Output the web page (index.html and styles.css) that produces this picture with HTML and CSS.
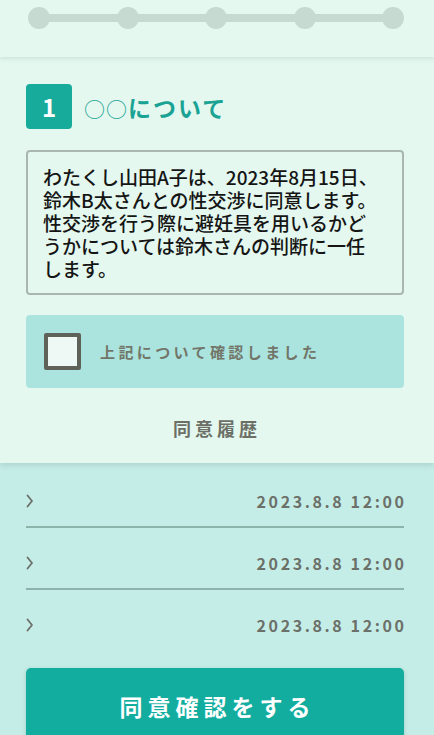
FILE: index.html
```html
<!DOCTYPE html>
<html lang="ja">
<head>
<meta charset="utf-8">
<title>同意確認</title>
<link rel="stylesheet" href="styles.css">
</head>
<body>
<header class="header">
  <div class="progress">
    <span class="dot"></span><span class="bar"></span>
    <span class="dot"></span><span class="bar"></span>
    <span class="dot"></span><span class="bar"></span>
    <span class="dot"></span><span class="bar"></span>
    <span class="dot"></span>
  </div>
</header>
<section class="card">
  <div class="title-row">
    <span class="badge">1</span>
    <h1 class="title"><span class="marks">○○</span>について</h1>
  </div>
  <div class="terms">
    <p class="line">わたくし山田A子は、2023年8月15日、</p>
    <p class="line">鈴木B太さんとの性交渉に同意します。</p>
    <p class="line">性交渉を行う際に避妊具を用いるかど</p>
    <p class="line">うかについては鈴木さんの判断に一任</p>
    <p class="line">します。</p>
  </div>
  <label class="confirm">
    <span class="checkbox"></span>
    <span class="confirm-text">上記について確認しました</span>
  </label>
  <h2 class="history-title">同意履歴</h2>
</section>
<ul class="history">
  <li class="row"><svg class="chev" width="8" height="14" viewBox="0 0 8 14"><polyline points="1.5,1.5 6,7 1.5,12.5" fill="none" stroke="#6b7069" stroke-width="1.8" stroke-linecap="round" stroke-linejoin="round"/></svg><span class="date">2023.8.8 12:00</span></li>
  <li class="row"><svg class="chev" width="8" height="14" viewBox="0 0 8 14"><polyline points="1.5,1.5 6,7 1.5,12.5" fill="none" stroke="#6b7069" stroke-width="1.8" stroke-linecap="round" stroke-linejoin="round"/></svg><span class="date">2023.8.8 12:00</span></li>
  <li class="row"><svg class="chev" width="8" height="14" viewBox="0 0 8 14"><polyline points="1.5,1.5 6,7 1.5,12.5" fill="none" stroke="#6b7069" stroke-width="1.8" stroke-linecap="round" stroke-linejoin="round"/></svg><span class="date">2023.8.8 12:00</span></li>
</ul>
<button class="submit">同意確認をする</button>
</body>
</html>
```
FILE: styles.css
```css
* { box-sizing: border-box; }
html, body { margin: 0; padding: 0; }
body {
  background: #c5ede7;
  font-family: "Noto Sans CJK JP", "Noto Sans", sans-serif;
  width: 434px;
  overflow: hidden;
}
.header {
  position: relative;
  z-index: 2;
  height: 57px;
  background: #e4f8ef;
  box-shadow: 0 2px 4px rgba(60, 90, 80, 0.12);
  padding: 7px 30px 0 28px;
}
.progress {
  display: flex;
  align-items: center;
  height: 22px;
}
.dot {
  width: 22px;
  height: 22px;
  border-radius: 50%;
  background: #c6dad1;
  flex: none;
}
.bar {
  flex: 1;
  height: 8px;
  margin: 0 -2px;
  background: #c6dad1;
}
.card {
  position: relative;
  z-index: 1;
  background: #e4f8ef;
  padding: 27px 30px 23px 26px;
  box-shadow: 0 3px 5px rgba(60, 90, 80, 0.14);
}
.title-row {
  display: flex;
  align-items: center;
  gap: 12px;
}
.badge {
  width: 46px;
  height: 45px;
  border-radius: 4px;
  background: #17ab9b;
  color: #fff;
  font-size: 24px;
  font-weight: 700;
  display: flex;
  align-items: center;
  justify-content: center;
}
.title {
  margin: 0;
  font-size: 23px;
  font-weight: 700;
  letter-spacing: 2px;
  color: #1aa394;
}
.marks {
  font-weight: 400;
  font-size: 21px;
  letter-spacing: 1px;
}
.terms {
  margin-top: 21px;
  height: 145px;
  border: 2px solid #a9b7b0;
  border-radius: 4px;
  padding: 13px 8px 12px 15px;
  color: #151515;
}
.line {
  margin: 0;
  height: 23px;
  font-size: 19px;
  line-height: 23px;
  font-weight: 500;
  white-space: nowrap;
  overflow: visible;
}
.confirm {
  margin-top: 20px;
  height: 73px;
  background: #abe4df;
  border-radius: 4px;
  display: flex;
  align-items: center;
  padding-left: 18px;
  gap: 19px;
}
.checkbox {
  width: 37px;
  height: 37px;
  border: 4px solid #5f6258;
  border-radius: 2px;
  background: #eef8f4;
  flex: none;
}
.confirm-text {
  font-size: 15px;
  font-weight: 700;
  letter-spacing: 3.4px;
  color: #727669;
}
.history-title {
  margin: 28px 0 0;
  text-align: center;
  font-size: 18px;
  line-height: 24px;
  font-weight: 700;
  letter-spacing: 4px;
  color: #6b6f66;
  padding-left: 4px;
}
.history {
  list-style: none;
  margin: 3px 30px 0 26px;
  padding: 0;
}
.row {
  height: 62px;
  display: flex;
  align-items: flex-start;
  justify-content: space-between;
  padding-top: 25px;
  border-bottom: 2px solid #8db4aa;
}
.row:last-child { border-bottom: none; height: 60px; }
.chev { margin-top: 3px; }
.date {
  font-size: 16px;
  line-height: 20px;
  font-weight: 700;
  letter-spacing: 2.6px;
  margin-right: -2.6px;
  color: #6b7069;
}
.submit {
  display: flex;
  align-items: center;
  justify-content: center;
  margin: 18px 30px 0 26px;
  width: 378px;
  height: 76px;
  border: none;
  border-radius: 5px;
  background: #12ad9f;
  box-shadow: 0 1px 4px rgba(40, 80, 70, 0.2);
  color: #fff;
  font-family: "Noto Sans CJK JP", "Noto Sans", sans-serif;
  font-size: 23px;
  font-weight: 700;
  letter-spacing: 5px;
  padding: 0 0 0 5px;
}
```
